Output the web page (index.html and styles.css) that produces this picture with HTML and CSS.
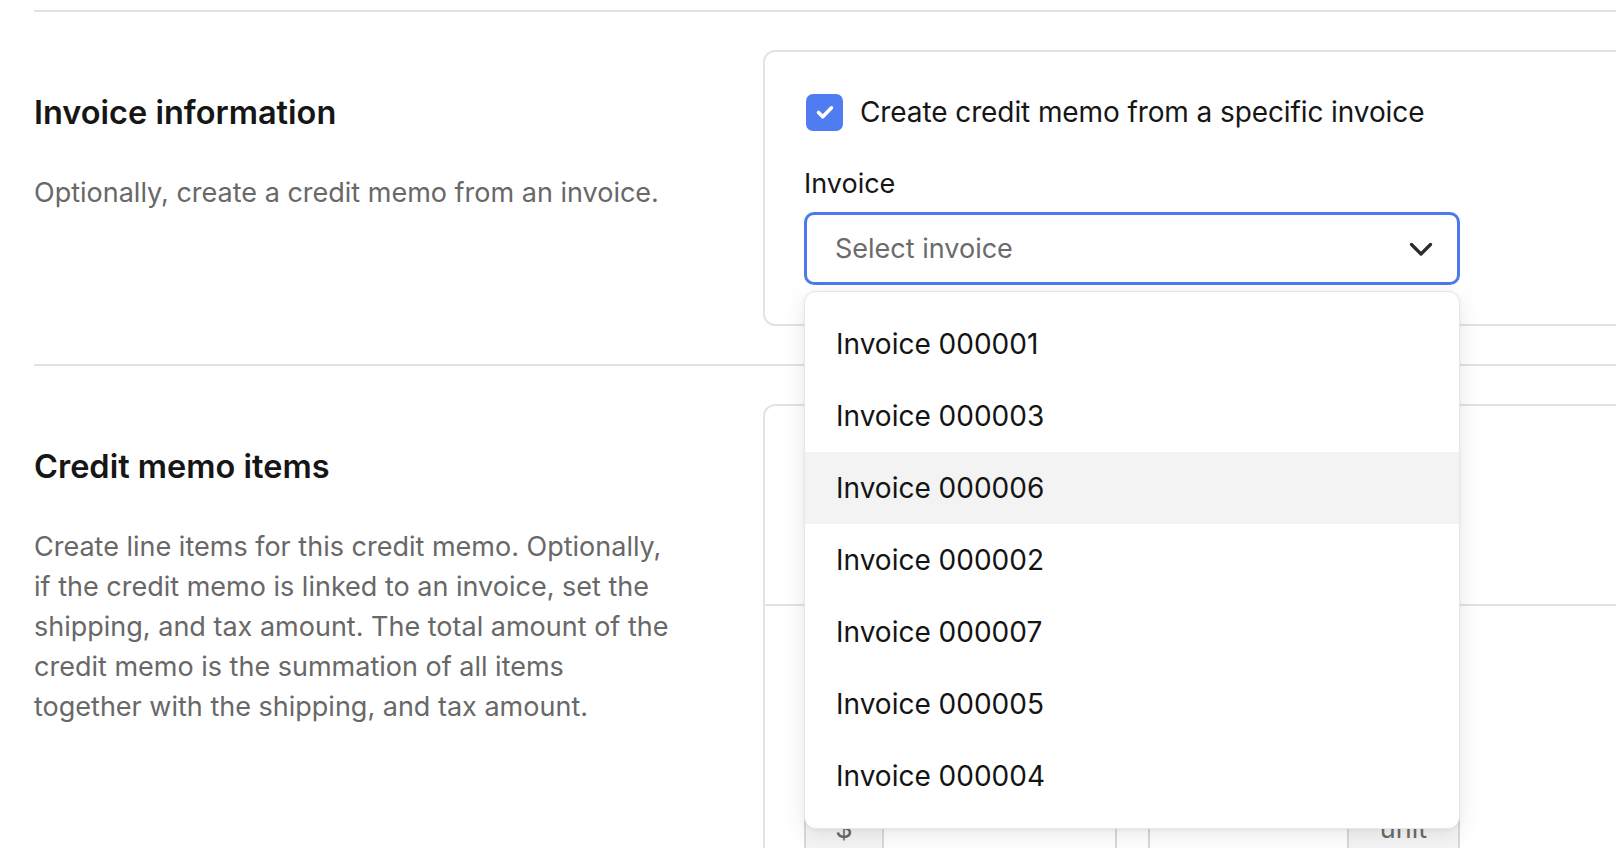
FILE: index.html
```html
<!DOCTYPE html>
<html lang="en">
<head>
<meta charset="utf-8">
<title>Credit memo</title>
<link rel="stylesheet" href="styles.css">
</head>
<body>
<div class="page">
  <section class="section first">
    <div class="intro">
      <h2 class="title">Invoice information</h2>
      <p class="desc">Optionally, create a credit memo from an invoice.</p>
    </div>
    <div class="card">
      <label class="check-row">
        <span class="checkbox">
          <svg viewBox="0 0 24 24" width="24" height="24"><path d="M5.5 12.5l4.3 4.3L18.5 7.8" fill="none" stroke="#fff" stroke-width="3.6" stroke-linecap="round" stroke-linejoin="round"/></svg>
        </span>
        <span class="check-label">Create credit memo from a specific invoice</span>
      </label>
      <div class="field-label">Invoice</div>
      <div class="select-wrap">
        <div class="select">
          <span class="placeholder">Select invoice</span>
          <svg class="chevron" viewBox="0 0 24 14" width="24" height="14"><path d="M2.5 2.5l9.5 9.5 9.5-9.5" fill="none" stroke="#2b2b2b" stroke-width="3.2" stroke-linecap="round" stroke-linejoin="round"/></svg>
        </div>
        <ul class="menu">
          <li class="option">Invoice 000001</li>
          <li class="option">Invoice 000003</li>
          <li class="option active">Invoice 000006</li>
          <li class="option">Invoice 000002</li>
          <li class="option">Invoice 000007</li>
          <li class="option">Invoice 000005</li>
          <li class="option">Invoice 000004</li>
        </ul>
      </div>
    </div>
  </section>
  <section class="section">
    <div class="intro">
      <h2 class="title">Credit memo items</h2>
      <p class="desc">Create line items for this credit memo. Optionally,<br>if the credit memo is linked to an invoice, set the<br>shipping, and tax amount. The total amount of the<br>credit memo is the summation of all items<br>together with the shipping, and tax amount.</p>
    </div>
    <div class="card items-card">
      <div class="items-head"></div>
      <div class="items-body">
        <div class="input-row">
          <div class="group">
            <span class="addon left">$</span>
            <span class="input"></span>
          </div>
          <div class="group">
            <span class="input"></span>
            <span class="addon right">unit</span>
          </div>
        </div>
      </div>
    </div>
  </section>
</div>
</body>
</html>
```

FILE: styles.css
```css
* { box-sizing: border-box; }
html, body {
  margin: 0;
  padding: 0;
  background: #fff;
  overflow: hidden;
}
body {
  font-family: Inter, "Noto Sans", sans-serif;
  color: #141414;
  width: 1616px;
  height: 848px;
}
.page {
  padding-top: 10px;
  padding-left: 34px;
  width: 2400px;
}
.section {
  border-top: 2px solid #e2e2e2;
  display: grid;
  grid-template-columns: 729px 1100px;
  padding: 38px 0 38px;
}
.intro {
  padding-top: 43px;
}
.title {
  margin: 0 0 40px;
  font-size: 32.5px;
  line-height: 40px;
  font-weight: 600;
  color: #161616;
}
.desc {
  margin: 0;
  font-size: 27px;
  line-height: 40px;
  color: #686868;
}
.card {
  border: 2px solid #e3e3e3;
  border-radius: 12px;
  padding: 40px 39px 39px;
  background: #fff;
}
.check-row {
  display: flex;
  align-items: center;
  gap: 17px;
  height: 40px;
}
.checkbox {
  width: 37px;
  height: 37px;
  border-radius: 7px;
  background: #4f7cf0;
  display: flex;
  align-items: center;
  justify-content: center;
  margin-left: 2px;
}
.check-label {
  font-size: 28px;
  color: #161616;
  letter-spacing: -0.1px;
}
.field-label {
  margin-top: 32px;
  font-size: 27px;
  line-height: 40px;
  color: #161616;
}
.select-wrap {
  position: relative;
  width: 656px;
  margin-top: 8px;
}
.select {
  height: 73px;
  border: 3px solid #4d79f0;
  border-radius: 10px;
  display: flex;
  align-items: center;
  justify-content: space-between;
  padding: 0 24px 0 28px;
}
.placeholder {
  font-size: 27px;
  color: #6b6b6b;
}
.chevron {
  display: block;
  margin-top: 1px;
}
.menu {
  position: absolute;
  top: 79px;
  left: 0;
  width: 656px;
  margin: 0;
  padding: 16px 0;
  list-style: none;
  background: #fff;
  border: 1px solid #e6e6e6;
  border-radius: 12px;
  box-shadow: 0 6px 24px rgba(0, 0, 0, 0.09), 0 1px 4px rgba(0, 0, 0, 0.05);
  z-index: 10;
}
.option {
  height: 72px;
  display: flex;
  align-items: center;
  padding-left: 31px;
  font-size: 28px;
  color: #141414;
}
.option.active {
  background: #f3f3f3;
}
.items-card {
  padding: 0;
  height: 520px;
}
.items-head {
  height: 200px;
  border-bottom: 2px solid #e3e3e3;
}
.items-body {
  padding: 186px 39px 0;
}
.input-row {
  display: flex;
  gap: 31px;
  width: 656px;
}
.group {
  flex: 1;
  display: flex;
  height: 72px;
  border: 2px solid #d9d9d9;
  border-radius: 10px;
  overflow: hidden;
}
.addon {
  background: #f5f5f5;
  color: #6b6b6b;
  font-size: 27px;
  display: flex;
  align-items: center;
  justify-content: center;
}
.addon.left {
  width: 78px;
  border-right: 2px solid #d9d9d9;
}
.addon.right {
  width: 111px;
  border-left: 2px solid #d9d9d9;
}
.input {
  flex: 1;
}
```
